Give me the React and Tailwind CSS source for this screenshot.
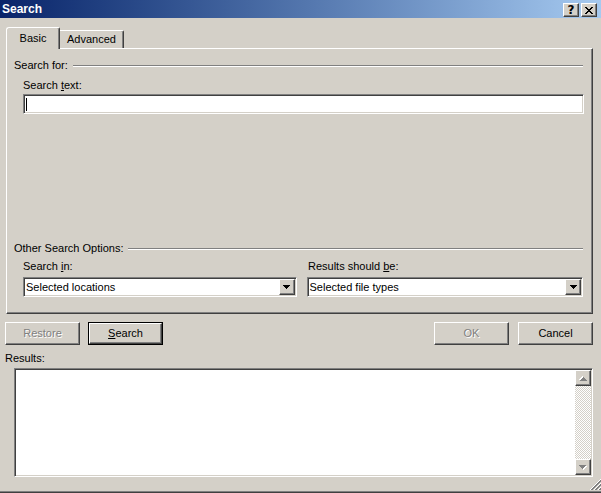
import React from "react";

const raised =
  "border border-t-white border-l-white border-r-[#404040] border-b-[#404040] shadow-[inset_-1px_-1px_#808080] bg-[#d4d0c8]";
const sunken =
  "border border-t-[#808080] border-l-[#808080] border-r-white border-b-white shadow-[inset_1px_1px_#404040,inset_-1px_-1px_#d4d0c8] bg-white";

function DownArrow({ color = "#000" }) {
  return (
    <svg width="7" height="4" viewBox="0 0 7 4" shapeRendering="crispEdges">
      <path d="M0 0h7v1h-1v1h-1v1h-1v1h-1v-1h-1v-1h-1v-1h-1z" fill={color} />
    </svg>
  );
}

function Select({ text, width }) {
  return (
    <div className={`flex h-[20px] p-px ${sunken} ${width}`}>
      <div className="flex-1 flex items-center pl-[1px] whitespace-nowrap">{text}</div>
      <div className={`w-[16px] h-[16px] flex items-center justify-center ${raised}`}>
        <DownArrow />
      </div>
    </div>
  );
}

function Button({ children, disabled, def }) {
  if (def) {
    return (
      <div className="w-[75px] h-[23px] border border-black">
        <div className={`w-full h-full flex items-center justify-center ${raised}`}>{children}</div>
      </div>
    );
  }
  return (
    <div
      className={`w-[75px] h-[23px] flex items-center justify-center ${raised} ${
        disabled ? "text-[#808080] [text-shadow:1px_1px_0_#ffffff]" : ""
      }`}
    >
      {children}
    </div>
  );
}

function ScrollBtn({ up }) {
  return (
    <div className={`w-[16px] h-[16px] flex items-center justify-center ${raised}`}>
      <svg width="8" height="5" viewBox="0 0 8 5" shapeRendering="crispEdges" className={up ? "rotate-180" : ""}>
        <path d="M1 1h7v1h-1v1h-1v1h-1v1h-1v-1h-1v-1h-1v-1h-1z" fill="#ffffff" />
        <path d="M0 0h7v1h-1v1h-1v1h-1v1h-1v-1h-1v-1h-1v-1h-1z" fill="#808080" />
      </svg>
    </div>
  );
}

export default function App() {
  return (
    <div className="relative w-[601px] h-[493px] bg-[#d4d0c8] flex flex-col overflow-hidden font-['Liberation_Sans',Arial,sans-serif] text-[11px] leading-[13px] text-black select-none">
      {/* Title bar */}
      <div className="h-[18px] flex items-center justify-between pl-[2px] pr-[4px] bg-linear-to-r from-[#0a246a] to-[#a6caf0]">
        <span className="text-white font-bold text-[12px] leading-[14px]">Search</span>
        <div className="flex gap-[2px] mt-[2px]">
          <div className={`w-[16px] h-[14px] flex items-center justify-center ${raised}`}>
            <span className="font-bold text-[12px] leading-[12px] font-['DejaVu_Sans',sans-serif]">?</span>
          </div>
          <div className={`w-[16px] h-[14px] flex items-center justify-center ${raised}`}>
            <svg width="8" height="7" viewBox="0 0 8 7" shapeRendering="crispEdges">
              <path d="M0 0h2v1h1v1h2v-1h1v-1h2v1h-1v1h-1v1h-1v1h1v1h1v1h1v1h-2v-1h-1v-1h-2v1h-1v1h-2v-1h1v-1h1v-1h1v-1h-1v-1h-1v-1h-1z" fill="#000" />
            </svg>
          </div>
        </div>
      </div>

      {/* Tabs */}
      <div className="relative z-10 flex items-end h-[21px] mt-[9px] ml-[6px]">
        <div className="w-[54px] h-[22px] -mb-px bg-[#d4d0c8] border-t border-l border-r border-t-white border-l-white border-r-[#404040] shadow-[inset_-1px_0_#808080] rounded-tl-[3px] rounded-tr-[2px] text-center pt-[4px]">
          Basic
        </div>
        <div className="w-[64px] h-[18px] border-t border-r border-t-white border-r-[#404040] shadow-[inset_-1px_0_#808080] rounded-tr-[2px] text-center pt-[2px]">
          Advanced
        </div>
      </div>

      {/* Panel */}
      <div className="ml-[6px] w-[587px] h-[266px] flex flex-col border border-t-white border-l-white border-r-[#404040] border-b-[#404040] shadow-[inset_-1px_-1px_#808080] pl-[7px] pr-[9px] pb-[16px]">
        <div className="mt-[10px] h-[13px] flex items-center">
          <span>Search for:</span>
          <div className="flex-1 ml-[5px] h-[2px] border-t border-t-[#808080] border-b border-b-white" />
        </div>
        <div className="mt-[7px] ml-[9px] h-[13px]">
          Search <span className="underline">t</span>ext:
        </div>
        <div className={`mt-[2px] ml-[9px] w-[561px] h-[20px] ${sunken} flex items-center pl-[2px]`}>
          <div className="w-px h-[13px] bg-black" />
        </div>

        <div className="mt-auto">
          <div className="h-[13px] flex items-center">
            <span>Other Search Options:</span>
            <div className="flex-1 ml-[5px] h-[2px] border-t border-t-[#808080] border-b border-b-white" />
          </div>
          <div className="mt-[5px] ml-[9px] h-[13px] flex">
            <div className="w-[285px]">
              Search <span className="underline">i</span>n:
            </div>
            <div>
              Results should <span className="underline">b</span>e:
            </div>
          </div>
          <div className="mt-[4px] ml-[9px] flex gap-[10px]">
            <Select text="Selected locations" width="w-[274px]" />
            <Select text="Selected file types" width="w-[277px]" />
          </div>
        </div>
      </div>

      {/* Buttons */}
      <div className="mt-[8px] h-[23px] flex justify-between pl-[5px] pr-[8px]">
        <div className="flex gap-[8px]">
          <Button disabled>Restore</Button>
          <Button def>
            <span>
              <span className="underline">S</span>earch
            </span>
          </Button>
        </div>
        <div className="flex gap-[9px]">
          <Button disabled>OK</Button>
          <Button>Cancel</Button>
        </div>
      </div>

      <div className="mt-[7px] pl-[5px] h-[13px]">Results:</div>

      <div className={`mt-[3px] ml-[14px] w-[579px] h-[109px] p-px flex justify-end ${sunken}`}>
        <div className="w-[16px] h-full flex flex-col">
          <ScrollBtn up />
          <div className="flex-1 bg-[repeating-conic-gradient(#d4d0c8_0%_25%,#ffffff_0%_50%)] bg-size-[2px_2px]" />
          <ScrollBtn />
        </div>
      </div>

      <div className="mt-auto h-[2px] border-t border-t-[#808080] border-b border-b-[#404040]" />

      {/* Resize grip */}
      <svg
        className="absolute right-0 bottom-[2px]"
        width="12"
        height="12"
        viewBox="0 0 12 12"
        shapeRendering="crispEdges"
      >
        <path d="M11.5 0.5 L0.5 11.5" stroke="#ffffff" />
        <path d="M11.5 1.5 L1.5 11.5 M11.5 2.5 L2.5 11.5" stroke="#808080" />
        <path d="M11.5 4.5 L4.5 11.5" stroke="#ffffff" />
        <path d="M11.5 5.5 L5.5 11.5 M11.5 6.5 L6.5 11.5" stroke="#808080" />
        <path d="M11.5 8.5 L8.5 11.5" stroke="#ffffff" />
        <path d="M11.5 9.5 L9.5 11.5 M11.5 10.5 L10.5 11.5" stroke="#808080" />
      </svg>
    </div>
  );
}
